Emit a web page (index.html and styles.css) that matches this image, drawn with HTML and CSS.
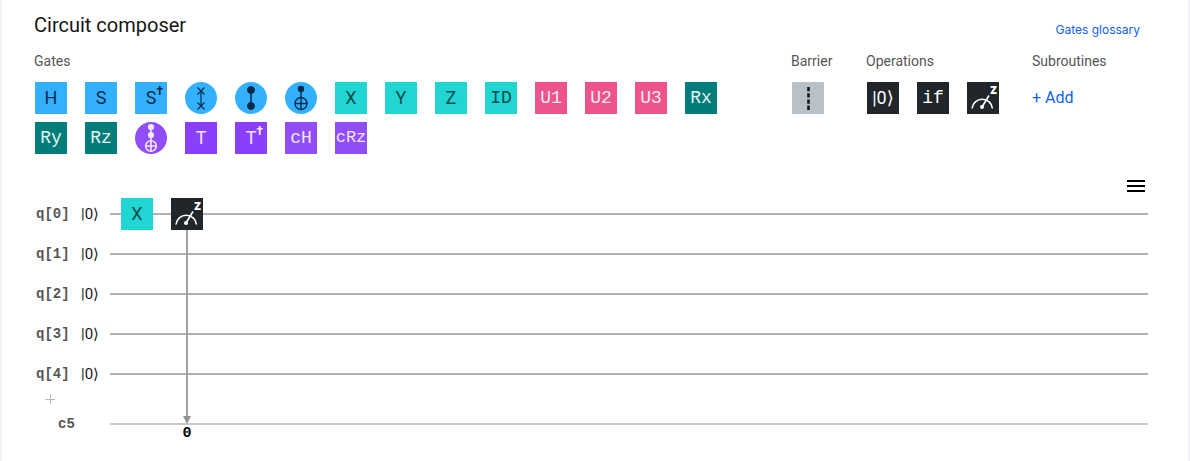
FILE: index.html
```html
<!DOCTYPE html>
<html lang="en">
<head>
<meta charset="utf-8">
<title>Circuit composer</title>
<link rel="stylesheet" href="styles.css">
</head>
<body>
<svg class="defs" aria-hidden="true">
  <symbol id="meter" viewBox="0 0 32 32">
    <path d="M5 26.5A10.300 10.300 0 0 1 25.500 26.500" fill="none" stroke="#fff" stroke-width="1.6"/>
    <path d="M15 25L22 13.5" stroke="#fff" stroke-width="1.6"/>
    <circle cx="15" cy="25" r="2" fill="#fff"/>
  </symbol>
</svg>
<main class="composer">
  <header class="top">
    <h1 class="title">Circuit composer</h1>
    <a class="glossary" href="#glossary">Gates glossary</a>
  </header>
  <div class="palette">
    <section class="group gates">
      <h2 class="label">Gates</h2>
      <div class="tiles">
        <button class="gate blue">H</button>
        <button class="gate blue">S</button>
        <button class="gate blue dag">S<sup>†</sup></button>
        <button class="gate blue round" aria-label="Swap"><svg viewBox="0 0 32 32" fill="none" stroke="#052a4c" stroke-width="1.2"><path d="M12.5 5.5l7 7m0-7l-7 7M12.5 20.5l7 7m0-7l-7 7"/><path d="M16 9v15"/></svg></button>
        <button class="gate blue round" aria-label="Controlled Z"><svg viewBox="0 0 32 32" fill="#052a4c" stroke="#052a4c"><circle cx="16" cy="8" r="3.5"/><circle cx="16" cy="24" r="3.5"/><path d="M16 8v16" stroke-width="1.6"/></svg></button>
        <button class="gate blue round" aria-label="Controlled not"><svg viewBox="0 0 32 32" fill="none" stroke="#052a4c" stroke-width="1.4"><circle cx="16" cy="7" r="2.5" fill="#052a4c"/><circle cx="16" cy="21.5" r="6"/><path d="M16 7v20.500M10 21.500h12"/></svg></button>
        <button class="gate teal">X</button>
        <button class="gate teal">Y</button>
        <button class="gate teal">Z</button>
        <button class="gate teal mono">ID</button>
        <button class="gate pink mono">U1</button>
        <button class="gate pink mono">U2</button>
        <button class="gate pink mono">U3</button>
        <button class="gate green mono">Rx</button>
        <button class="gate green mono">Ry</button>
        <button class="gate green mono">Rz</button>
        <button class="gate violet round" aria-label="Toffoli"><svg viewBox="0 0 32 32" fill="none" stroke="#f2eaff" stroke-width="1.6"><circle cx="16" cy="5" r="2.3" fill="#f2eaff"/><circle cx="16" cy="13" r="2.3" fill="#f2eaff"/><circle cx="16" cy="24" r="5.300"/><path d="M16 5v24M11 24h10"/></svg></button>
        <button class="gate purple">T</button>
        <button class="gate purple dag">T<sup>†</sup></button>
        <button class="gate violet mono">cH</button>
        <button class="gate violet mono long">cRz</button>
      </div>
    </section>
    <section class="group barrier">
      <h2 class="label">Barrier</h2>
      <div class="row"><button class="gate gray" aria-label="Barrier"><svg viewBox="0 0 32 32"><path d="M16.500 5v23" stroke="#161616" stroke-width="2.600" stroke-dasharray="4.300 1.900"/></svg></button></div>
    </section>
    <section class="group operations">
      <h2 class="label">Operations</h2>
      <div class="row">
        <button class="gate dark ket">|0⟩</button>
        <button class="gate dark mono">if</button>
        <button class="gate dark" aria-label="Measure"><svg><use href="#meter"/></svg><span class="basis">z</span></button>
      </div>
    </section>
    <section class="group subroutines">
      <h2 class="label">Subroutines</h2>
      <button class="add">+ Add</button>
    </section>
  </div>
  <div class="toolbar">
    <button class="menu" aria-label="Menu"><span></span><span></span><span></span></button>
  </div>
  <div class="circuit">
    <div class="line"><span class="name">q[0]</span><span class="ket">|0⟩</span>
      <div class="wire">
        <button class="gate teal">X</button>
        <div class="measure">
          <button class="gate dark" aria-label="Measure"><svg><use href="#meter"/></svg><span class="basis">z</span></button>
          <div class="link"><i class="stem"></i><i class="arrow"></i><span class="bit">0</span></div>
        </div>
      </div>
    </div>
    <div class="line"><span class="name">q[1]</span><span class="ket">|0⟩</span><div class="wire"></div></div>
    <div class="line"><span class="name">q[2]</span><span class="ket">|0⟩</span><div class="wire"></div></div>
    <div class="line"><span class="name">q[3]</span><span class="ket">|0⟩</span><div class="wire"></div></div>
    <div class="line"><span class="name">q[4]</span><span class="ket">|0⟩</span><div class="wire"></div></div>
    <button class="plus" aria-label="Add qubit"><svg viewBox="0 0 10 10"><path d="M0 5.500h10M5.500 0v10" stroke="#b8b8b8"/></svg></button>
    <div class="line classical"><span class="name">c5</span><span></span><div class="wire"></div></div>
  </div>
</main>
</body>
</html>
```
FILE: styles.css
```css
* { box-sizing: border-box; }
body {
  margin: 0;
  background: #fff;
  color: #161616;
  font-family: Roboto, "Liberation Sans", sans-serif;
}
button {
  border: 0;
  padding: 0;
  background: none;
  font-family: inherit;
  cursor: pointer;
}
.defs { position: absolute; width: 0; height: 0; }
.composer {
  min-height: 100vh;
  padding: 10px 40px 16px 32px;
  border: solid #f1f1f8;
  border-width: 0 2px;
}
.top {
  display: flex;
  justify-content: space-between;
  align-items: center;
  height: 30px;
  padding-right: 8px;
}
.title { margin: 0; font-size: 20px; font-weight: 400; }
.glossary {
  padding-top: 8px;
  color: #0f62fe;
  font-family: Inter, sans-serif;
  font-size: 12px;
  text-decoration: none;
}
.palette { display: flex; padding-top: 11px; }
.label {
  margin: 0 0 11px;
  color: #565656;
  font-size: 14px;
  font-weight: 400;
  line-height: 20px;
}
.gates { flex: 1; }
.barrier { width: 75px; }
.operations { width: 166px; }
.subroutines { width: 116px; }
.tiles {
  display: grid;
  grid-template-columns: repeat(auto-fill, 32px);
  gap: 8px 18px;
  padding: 0 40px 0 1px;
}
.row { display: flex; gap: 18px; padding-left: 1px; }
.gate {
  position: relative;
  display: flex;
  justify-content: center;
  align-items: center;
  width: 32px;
  height: 32px;
  font-size: 18px;
  line-height: 32px;
}
.gate svg { display: block; width: 32px; height: 32px; }
.mono { font-family: "Liberation Mono", monospace; }
.long { font-size: 17px; }
.round { border-radius: 50%; }
.blue { background: #33b1ff; color: #0b2c4a; }
.teal { background: #20d5d2; color: #084d4d; }
.pink { background: #ee538b; color: #fbe9f0; }
.green { background: #007d79; color: #e3f5f4; }
.purple { background: #8a3ffc; color: #f0e6ff; }
.violet { background: #924dfb; color: #f0e6ff; }
.gray { background: #b8c0c8; }
.dark { background: #20262a; color: #fff; }
.dag sup {
  position: absolute;
  top: 2px;
  right: 4px;
  font-size: 12px;
  font-weight: 700;
  line-height: 14px;
}
.basis {
  position: absolute;
  top: 1px;
  right: 2px;
  font-size: 14px;
  font-weight: 700;
  line-height: 12px;
}
.ket { font-family: Roboto, "DejaVu Sans", sans-serif; font-size: 15px; }
.gate.ket { font-size: 18px; }
.add { color: #0f62fe; font-size: 16px; line-height: 32px; }
.toolbar { display: flex; justify-content: flex-end; padding: 26px 3px 2px 0; }
.menu { display: grid; gap: 3px; width: 18px; }
.menu span { height: 2px; background: #000; }
.line {
  display: grid;
  grid-template-columns: 47px 29px 1fr;
  align-items: center;
  height: 40px;
}
.name {
  padding-left: 2px;
  color: #565656;
  font-family: "Liberation Mono", monospace;
  font-size: 14px;
  font-weight: 700;
}
.wire {
  display: flex;
  gap: 18px;
  height: 32px;
  padding-left: 11px;
  background: linear-gradient(#b0b0b0, #b0b0b0) center / 100% 2px no-repeat;
}
.classical .name { padding-left: 24px; }
.classical .wire { background-image: linear-gradient(#cacaca, #cacaca); }
.measure { position: relative; }
.link {
  position: absolute;
  top: 32px;
  left: 0;
  display: flex;
  flex-direction: column;
  align-items: center;
  width: 32px;
}
.stem { width: 2px; height: 186px; background: #a2a2a2; }
.arrow {
  border: solid transparent;
  border-width: 8px 4px 0;
  border-top-color: #949494;
}
.bit {
  color: #000;
  font-family: "Liberation Mono", monospace;
  font-size: 15px;
  font-weight: 700;
  line-height: 20px;
}
.plus { display: block; height: 10px; margin-left: 11px; }
.plus svg { display: block; width: 10px; height: 10px; }
```
